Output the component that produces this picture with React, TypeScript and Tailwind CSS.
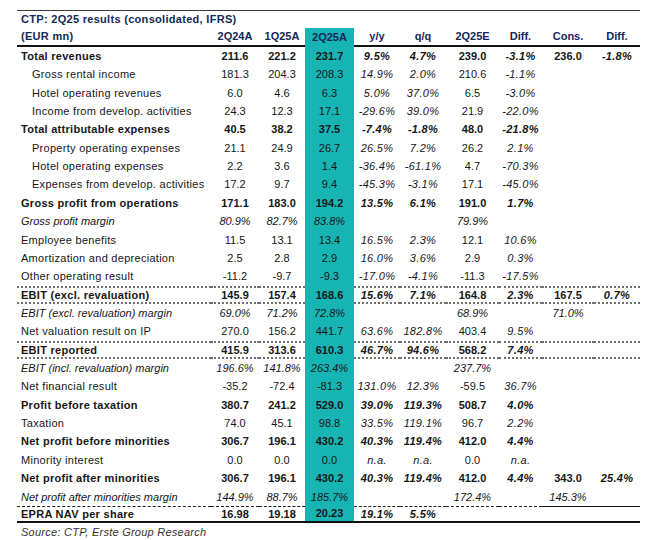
import React from "react";

type Row = {
  label: string;
  kind?: "bold" | "italic" | "normal";
  indent?: boolean;
  values: string[];
  lines?: "dotted" | "epra";
};

const widths = ["w-[48px]", "w-[46px]", "w-[49px]", "w-[46px]", "w-[46px]", "w-[53px]", "w-[43px]", "w-[52px]", "w-[46px]"];
const headers = ["2Q24A", "1Q25A", "2Q25A", "y/y", "q/q", "2Q25E", "Diff.", "Cons.", "Diff."];
// columns that show percentages are always set in italics
const pctCols = [3, 4, 6, 8];

const rows: Row[] = [
  { label: "Total revenues", kind: "bold", values: ["211.6", "221.2", "231.7", "9.5%", "4.7%", "239.0", "-3.1%", "236.0", "-1.8%"] },
  { label: "Gross rental income", indent: true, values: ["181.3", "204.3", "208.3", "14.9%", "2.0%", "210.6", "-1.1%"] },
  { label: "Hotel operating revenues", indent: true, values: ["6.0", "4.6", "6.3", "5.0%", "37.0%", "6.5", "-3.0%"] },
  { label: "Income from develop. activities", indent: true, values: ["24.3", "12.3", "17.1", "-29.6%", "39.0%", "21.9", "-22.0%"] },
  { label: "Total attributable expenses", kind: "bold", values: ["40.5", "38.2", "37.5", "-7.4%", "-1.8%", "48.0", "-21.8%"] },
  { label: "Property operating expenses", indent: true, values: ["21.1", "24.9", "26.7", "26.5%", "7.2%", "26.2", "2.1%"] },
  { label: "Hotel operating expenses", indent: true, values: ["2.2", "3.6", "1.4", "-36.4%", "-61.1%", "4.7", "-70.3%"] },
  { label: "Expenses from develop. activities", indent: true, values: ["17.2", "9.7", "9.4", "-45.3%", "-3.1%", "17.1", "-45.0%"] },
  { label: "Gross profit from operations", kind: "bold", values: ["171.1", "183.0", "194.2", "13.5%", "6.1%", "191.0", "1.7%"] },
  { label: "Gross profit margin", kind: "italic", values: ["80.9%", "82.7%", "83.8%", "", "", "79.9%"] },
  { label: "Employee benefits", values: ["11.5", "13.1", "13.4", "16.5%", "2.3%", "12.1", "10.6%"] },
  { label: "Amortization and depreciation", values: ["2.5", "2.8", "2.9", "16.0%", "3.6%", "2.9", "0.3%"] },
  { label: "Other operating result", values: ["-11.2", "-9.7", "-9.3", "-17.0%", "-4.1%", "-11.3", "-17.5%"] },
  { label: "EBIT (excl. revaluation)", kind: "bold", lines: "dotted", values: ["145.9", "157.4", "168.6", "15.6%", "7.1%", "164.8", "2.3%", "167.5", "0.7%"] },
  { label: "EBIT (excl. revaluation) margin", kind: "italic", values: ["69.0%", "71.2%", "72.8%", "", "", "68.9%", "", "71.0%"] },
  { label: "Net valuation result on IP", values: ["270.0", "156.2", "441.7", "63.6%", "182.8%", "403.4", "9.5%"] },
  { label: "EBIT reported", kind: "bold", lines: "dotted", values: ["415.9", "313.6", "610.3", "46.7%", "94.6%", "568.2", "7.4%"] },
  { label: "EBIT (incl. revaluation) margin", kind: "italic", values: ["196.6%", "141.8%", "263.4%", "", "", "237.7%"] },
  { label: "Net financial result", values: ["-35.2", "-72.4", "-81.3", "131.0%", "12.3%", "-59.5", "36.7%"] },
  { label: "Profit before taxation", kind: "bold", values: ["380.7", "241.2", "529.0", "39.0%", "119.3%", "508.7", "4.0%"] },
  { label: "Taxation", values: ["74.0", "45.1", "98.8", "33.5%", "119.1%", "96.7", "2.2%"] },
  { label: "Net profit before minorities", kind: "bold", values: ["306.7", "196.1", "430.2", "40.3%", "119.4%", "412.0", "4.4%"] },
  { label: "Minority interest", values: ["0.0", "0.0", "0.0", "n.a.", "n.a.", "0.0", "n.a."] },
  { label: "Net profit after minorities", kind: "bold", values: ["306.7", "196.1", "430.2", "40.3%", "119.4%", "412.0", "4.4%", "343.0", "25.4%"] },
  { label: "Net profit after minorities margin", kind: "italic", values: ["144.9%", "88.7%", "185.7%", "", "", "172.4%", "", "145.3%"] },
];

const epra: Row = { label: "EPRA NAV per share", kind: "bold", lines: "epra", values: ["16.98", "19.18", "20.23", "19.1%", "5.5%"] };

function lineClass(row: Row, col: number) {
  if (row.lines === "dotted") return "border-y-2 border-dotted border-[#707070]";
  if (row.lines === "epra") {
    if (col >= 7) return "border-t-[1.5px] border-solid border-[#111]";
    return "border-t border-dashed border-[#222]";
  }
  return "";
}

function TableRow({ row, height }: { row: Row; height: string }) {
  const weight = row.kind === "bold" ? "font-bold" : "";
  const italic = row.kind === "italic" ? "italic" : "";
  return (
    <div className={`flex ${height}`}>
      <div
        className={`w-[194px] flex items-center whitespace-nowrap ${italic ? "tracking-normal" : "tracking-[0.28px]"} ${row.indent ? "pl-[15px]" : "pl-[4px]"} ${weight} ${italic} ${lineClass(row, -1)}`}
      >
        {row.label}
      </div>
      {widths.map((w, i) => {
        const v = row.values[i] ?? "";
        const isTeal = i === 2;
        const pct = pctCols.includes(i);
        const it = italic || (pct ? "italic" : "");
        return (
          <div
            key={i}
            className={`${w} flex items-center justify-center whitespace-nowrap ${pct ? "tracking-[0.3px]" : ""} ${weight} ${it} ${isTeal ? "bg-[#17b4b4]" : lineClass(row, i)}`}
          >
            {v}
          </div>
        );
      })}
    </div>
  );
}

export default function App() {
  return (
    <div className="w-[648px] h-[540px] bg-white pt-[10px] font-['Liberation_Sans',Arial,sans-serif] text-[11px] text-[#161616]">
      <div className="ml-[17px] w-[623px] border-t-[1.5px] border-[#3a3a3a]">
        <div className="h-[17px] flex items-center pl-[4px] font-bold text-[#12285a] tracking-[0.3px]">
          CTP: 2Q25 results (consolidated, IFRS)
        </div>
        <div className="flex h-[19px] font-bold text-[#12285a]">
          <div className="w-[194px] flex items-center pl-[4px] tracking-[0.3px] border-b-2 border-[#111]">(EUR mn)</div>
          {headers.map((h, i) => (
            <div
              key={i}
              className={`${widths[i]} flex items-center justify-center ${i === 2 ? "bg-[#17b4b4]" : "border-b-2 border-[#111]"}`}
            >
              {h}
            </div>
          ))}
        </div>
        {rows.map((r) => (
          <TableRow key={r.label} row={r} height="h-[18.37px]" />
        ))}
        <div className="border-b-2 border-[#111]">
          <TableRow row={epra} height="h-[15px]" />
        </div>
        <div className="pl-[4px] pt-[1px] italic text-[#333] tracking-[0.25px]">Source: CTP, Erste Group Research</div>
      </div>
    </div>
  );
}
